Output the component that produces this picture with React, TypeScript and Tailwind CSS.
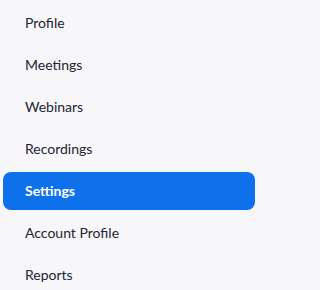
import { useState } from 'react';

const items = ['Profile', 'Meetings', 'Webinars', 'Recordings', 'Settings', 'Account Profile', 'Reports'];

const App = () => {
  const [active, setActive] = useState('Settings');

  return (
    <div className="min-h-screen w-full bg-[#f7f7fa] font-['Lato',sans-serif]">
      <nav className="flex w-[259px] flex-col gap-[4px] pt-[4px] pl-[3px] pr-[4px]">
        {items.map(item => (
          <button
            key={item}
            onClick={() => setActive(item)}
            className={
              item === active
                ? 'flex h-[38px] items-center rounded-[8px] bg-[#0e71eb] pb-[1px] pl-[22px] text-left text-[14px] font-bold text-white'
                : 'flex h-[38px] items-center rounded-[8px] pb-[1px] pl-[22px] text-left text-[14px] text-[#232333]'
            }
          >
            {item}
          </button>
        ))}
      </nav>
    </div>
  );
};

export default App;
